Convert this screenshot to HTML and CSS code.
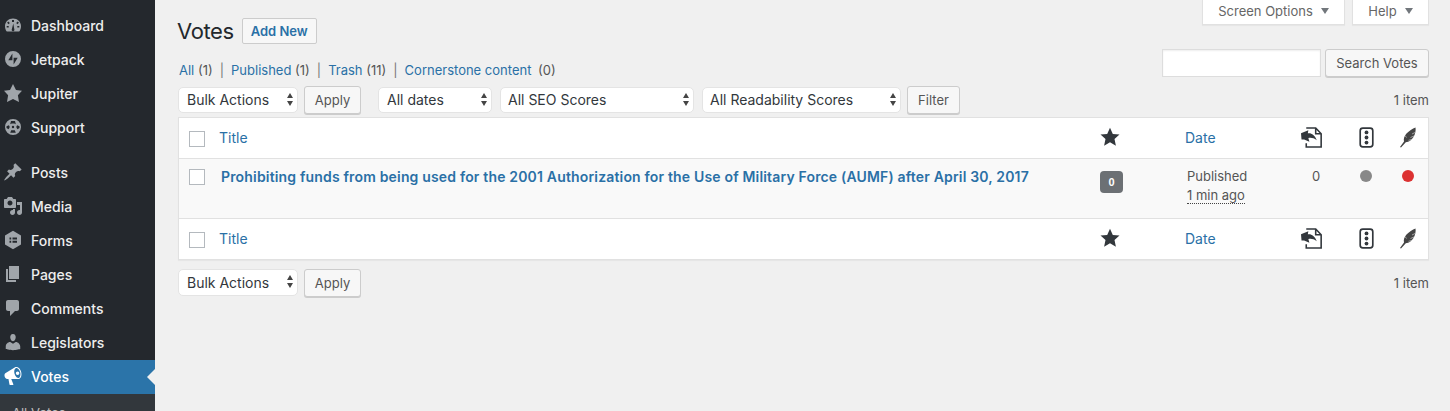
FILE: index.html
```html
<!DOCTYPE html>
<html lang="en">
<head>
  <meta charset="UTF-8">
  <meta name="viewport" content="width=device-width, initial-scale=1.0">
  <title>Votes</title>
  <link rel="stylesheet" href="styles.css">
</head>
<body>

<nav class="sidebar">
  <ul class="menu">
    <li><svg class="menu-icon" viewBox="0 0 20 20"><path fill-rule="evenodd" d="M3.800 16.500C2.600 15 2 13.300 2 11.200 2 6.800 5.500 3.500 10 3.500s8 3.300 8 7.700c0 2.100-.6 3.800-1.800 5.300zM9 5h2v2H9zM5.300 6.500l1.500 1.500-1.200 1.200-1.500-1.500zm9.400 0l1.200 1.200-1.500 1.500-1.200-1.200zM3.700 11h2v1.500h-2zm10.600 0h2v1.500h-2zM8.800 14.200L10.300 8.500l1 5.700a1.400 1.400 0 1 1-2.500 0z"/></svg>Dashboard</li>
    <li><svg class="menu-icon" viewBox="0 0 20 20"><path fill-rule="evenodd" d="M10 2a8 8 0 1 0 0 16 8 8 0 0 0 0-16zM9.400 4.500v6.800H5.300zM10.600 15.500V8.700h4.100z"/></svg>Jetpack</li>
    <li><svg class="menu-icon" viewBox="0 0 20 20"><path d="M10 1l3 6 6 .75-4.120 4.620L16 19l-6-3-6 3 1.120-6.630L1 7.750 7 7z"/></svg>Jupiter</li>
    <li><svg class="menu-icon" viewBox="0 0 20 20"><path fill-rule="evenodd" d="M10 2a8 8 0 1 0 0 16 8 8 0 0 0 0-16zM10 8.800a1.200 1.200 0 1 1 0 2.400 1.200 1.200 0 0 1 0-2.400zM8 4h4l.8 3.200-1.500-.6H8.700l-1.500.6zM3.500 9.200l2.400-1 .7 1.300-.1 1.200-1 1.600-2-1.300zM16.500 9.200l-2.400-1-.7 1.300.1 1.200 1 1.600 2-1.300zM8.200 13.300h3.600l1 2.500H7.200z"/></svg>Support</li>
    <li class="menu-sep"><svg class="menu-icon" viewBox="0 0 20 20"><path d="M10.440 3.020l1.820-1.820 6.360 6.350-1.830 1.820c-1.050-.68-2.480-.57-3.410.36l-.75.75c-.92.930-1.040 2.350-.35 3.410l-1.830 1.820-2.410-2.410-2.800 2.790c-.42.420-3.380 2.710-3.800 2.290s1.860-3.390 2.280-3.810l2.790-2.790L4.100 9.360l1.830-1.820c1.050.69 2.480.570 3.400-.36l.75-.75c.93-.920 1.050-2.350.36-3.410z"/></svg>Posts</li>
    <li><svg class="menu-icon" viewBox="0 0 20 20"><path fill-rule="evenodd" d="M13 11V4c0-.55-.45-1-1-1h-1.670L9 1H5L3.670 3H2c-.55 0-1 .45-1 1v7c0 .55.45 1 1 1h10c.55 0 1-.45 1-1zM7 4.500c1.380 0 2.500 1.120 2.500 2.500S8.380 9.500 7 9.500 4.500 8.380 4.500 7 5.620 4.500 7 4.500zM14 6h5v10.500c0 1.380-1.120 2.500-2.500 2.500S14 17.880 14 16.500s1.120-2.500 2.500-2.500c.17 0 .34.020.5.050V9h-3V6zm-4 8.050V13h2v3.500c0 1.380-1.120 2.500-2.500 2.500S7 17.880 7 16.500 8.120 14 9.500 14c.17 0 .34.020.5.050z"/></svg>Media</li>
    <li><svg class="menu-icon" viewBox="0 0 20 20"><path fill-rule="evenodd" d="M10 .8l8 4.600v9.200l-8 4.600-8-4.600V5.400zM6.500 7.500v2h1.700v-2zM9.500 7.500v2h4.500v-2zM6.500 10.700v2h1.700v-2zM9.500 10.700v2h4.500v-2z"/></svg>Forms</li>
    <li><svg class="menu-icon" viewBox="0 0 20 20"><path d="M6 15V2h10v13H6zm-1 1h8v2H3V5h2v11z"/></svg>Pages</li>
    <li><svg class="menu-icon" viewBox="0 0 20 20"><path d="M5 2h9c1.100 0 2 .9 2 2v7c0 1.100-.9 2-2 2h-2l-5 5v-5H5c-1.100 0-2-.9-2-2V4c0-1.100.9-2 2-2z"/></svg>Comments</li>
    <li><svg class="menu-icon" viewBox="0 0 20 20"><path d="M10 9.250c-2.270 0-2.730-3.440-2.730-3.440C7 4.020 7.820 2 9.970 2c2.160 0 2.980 2.020 2.710 3.810 0 0-.41 3.440-2.680 3.440zm0 2.570L12.720 10c2.390 0 4.520 2.330 4.520 4.530v2.490s-3.650 1.130-7.240 1.130c-3.650 0-7.240-1.130-7.240-1.130v-2.490c0-2.250 1.940-4.480 4.460-4.480z"/></svg>Legislators</li>
    <li class="menu-current"><svg class="menu-icon" viewBox="0 0 20 20"><path fill-rule="evenodd" d="M18.150 5.940c.46 1.620.38 3.220-.02 4.480-.42 1.280-1.260 2.180-2.300 2.480-.16.06-.26.06-.4.06-.06.02-.12.02-.18.02-.06.02-.14.02-.22.02H8.230l2.220 5.500c.02.14-.06.26-.14.34-.08.1-.24.16-.34.16H6.950c-.1 0-.26-.06-.34-.16-.08-.08-.16-.2-.14-.34l-1-5.500H4.250l-.02-.02c-.5.06-1.080-.18-1.540-.62s-.88-1.080-1.060-1.880c-.24-.8-.2-1.560-.02-2.200.18-.62.58-1.080 1.060-1.300l.02-.02 9-5.400c.1-.06.18-.1.24-.16.06-.04.14-.08.24-.12.16-.08.28-.12.5-.18 1.040-.3 2.240.1 3.220.98s1.840 2.240 2.260 3.860zm-2.580 5.980c.4-.1.74-.34 1.040-.7.58-.7.86-1.760.86-3.040 0-.64-.1-1.300-.28-1.980-.34-1.360-1.020-2.500-1.780-3.240-.38-.38-.8-.64-1.180-.78-.38-.12-.76-.14-1.100-.06-.6.14-1.080.6-1.400 1.240-.32.66-.48 1.500-.48 2.420 0 .66.1 1.340.28 2.020.34 1.360 1.020 2.500 1.780 3.240.38.38.8.64 1.180.78.38.12.76.14 1.100.06zM14.600 5.500a1.800 1.800 0 1 1 0 3.600 1.800 1.800 0 0 1 0-3.600z"/></svg>Votes</li>
  </ul>
  <div class="submenu">All Votes</div>
</nav>

<main class="content">
  <div class="top">
    <div class="top-left">
      <div class="heading">
        <h1>Votes</h1>
        <a class="add-new">Add New</a>
      </div>
      <ul class="subsub">
        <li><a>All</a> <span class="count">(1)</span></li>
        <li><a>Published</a> <span class="count">(1)</span></li>
        <li><a>Trash</a> <span class="count">(11)</span></li>
        <li><a>Cornerstone content</a> <span class="count count-wide">(0)</span></li>
      </ul>
    </div>
    <div class="top-right">
      <div class="tabs">
        <div class="tab tab-screen">Screen Options<span class="caret"></span></div>
        <div class="tab tab-help">Help<span class="caret"></span></div>
      </div>
      <div class="search">
        <input class="search-input" type="text">
        <button class="btn btn-search">Search Votes</button>
      </div>
    </div>
  </div>

  <div class="tablenav">
    <div class="fake-select sel-bulk">Bulk Actions</div>
    <button class="btn btn-apply">Apply</button>
    <div class="fake-select sel-dates">All dates</div>
    <div class="fake-select sel-seo">All SEO Scores</div>
    <div class="fake-select sel-read">All Readability Scores</div>
    <button class="btn btn-filter">Filter</button>
    <span class="items">1 item</span>
  </div>

  <table class="list">
    <colgroup>
      <col class="col-cb"><col class="col-title"><col class="col-star"><col class="col-date"><col class="col-links"><col class="col-light"><col class="col-read">
    </colgroup>
    <thead>
      <tr>
        <th><span class="check"></span></th>
        <th><a class="sort-link">Title</a></th>
        <th><svg class="star" viewBox="0 0 20 20"><path d="M10 .8l2.800 6.100 6.700.7-5 4.500 1.400 6.600-5.900-3.400-5.900 3.400 1.400-6.600-5-4.500 6.700-.7z"/></svg></th>
        <th><a class="sort-link">Date</a></th>
        <th><svg class="col-icon" viewBox="0 0 20 20"><path fill="none" stroke="currentColor" stroke-width="1.500" d="M5 1h9l5.200 5.500V19H5v-3.500M14 1v5.500h5.200"/><path d="M0 6l7-3-.5 3c3.500-.5 6.500 1.500 8.500 6.500-3-2-5-2.500-8-2l1 3.500-5-2H.5z"/></svg></th>
        <th><svg class="col-icon icon-light" viewBox="0 0 14 20"><rect x="1" y="1" width="12" height="18" rx="2.500" fill="none" stroke="currentColor" stroke-width="1.600"/><circle cx="7" cy="5.200" r="1.800"/><circle cx="7" cy="10" r="1.800"/><circle cx="7" cy="14.800" r="1.800"/></svg></th>
        <th><svg class="col-icon icon-quill" viewBox="0 0 16 20"><path d="M15.500 0c.5 3-.2 6.500-2 9.500-1.800 3-4.500 5-7.700 5.300L1 20l-1-.5 4-5.500c-.6-2.500.2-5.600 2.500-8C9 3.500 12.500 1 15.500 0z"/><path class="quill-cut" d="M15 5l-3 1.500M14 8.500l-3.500 1.500M11.500 12l-3 .8M5 8l1.500 2"/></svg></th>
      </tr>
    </thead>
    <tbody>
      <tr>
        <td><span class="check"></span></td>
        <td><a class="row-title">Prohibiting funds from being used for the 2001 Authorization for the Use of Military Force (AUMF) after April 30, 2017</a></td>
        <td><span class="badge">0</span></td>
        <td class="cell-date"><div class="cell-up">Published<br><abbr class="ago">1 min ago</abbr></div></td>
        <td class="cell-count"><div class="cell-up">0</div></td>
        <td><span class="dot dot-gray"></span></td>
        <td><span class="dot dot-red"></span></td>
      </tr>
    </tbody>
    <tfoot>
      <tr>
        <th><span class="check"></span></th>
        <th><a class="sort-link">Title</a></th>
        <th><svg class="star" viewBox="0 0 20 20"><path d="M10 .8l2.800 6.100 6.700.7-5 4.500 1.400 6.600-5.900-3.400-5.900 3.400 1.400-6.600-5-4.500 6.700-.7z"/></svg></th>
        <th><a class="sort-link">Date</a></th>
        <th><svg class="col-icon" viewBox="0 0 20 20"><path fill="none" stroke="currentColor" stroke-width="1.500" d="M5 1h9l5.200 5.500V19H5v-3.500M14 1v5.500h5.200"/><path d="M0 6l7-3-.5 3c3.500-.5 6.500 1.500 8.500 6.500-3-2-5-2.500-8-2l1 3.500-5-2H.5z"/></svg></th>
        <th><svg class="col-icon icon-light" viewBox="0 0 14 20"><rect x="1" y="1" width="12" height="18" rx="2.500" fill="none" stroke="currentColor" stroke-width="1.600"/><circle cx="7" cy="5.200" r="1.800"/><circle cx="7" cy="10" r="1.800"/><circle cx="7" cy="14.800" r="1.800"/></svg></th>
        <th><svg class="col-icon icon-quill" viewBox="0 0 16 20"><path d="M15.500 0c.5 3-.2 6.500-2 9.500-1.800 3-4.500 5-7.700 5.300L1 20l-1-.5 4-5.500c-.6-2.500.2-5.600 2.500-8C9 3.500 12.500 1 15.500 0z"/><path class="quill-cut" d="M15 5l-3 1.500M14 8.500l-3.500 1.500M11.500 12l-3 .8M5 8l1.500 2"/></svg></th>
      </tr>
    </tfoot>
  </table>

  <div class="tablenav tablenav-bottom">
    <div class="fake-select sel-bulk">Bulk Actions</div>
    <button class="btn btn-apply">Apply</button>
    <span class="items">1 item</span>
  </div>
</main>

</body>
</html>
```
FILE: styles.css
```css
* {
  box-sizing: border-box;
}
html, body {
  height: 411px;
  margin: 0;
  overflow: hidden;
}
body {
  display: flex;
  background-color: #f0f0f0;
  color: #444;
  font-family: Inter, "Liberation Sans", sans-serif;
  font-size: 13px;
}
a {
  color: #2a70a6;
}
ul {
  list-style: none;
  margin: 0;
  padding: 0;
}

/* sidebar */
.sidebar {
  width: 155px;
  flex-shrink: 0;
  background-color: #24282d;
  overflow: hidden;
}
.menu {
  padding-top: 9px;
}
.menu li {
  position: relative;
  display: flex;
  align-items: center;
  height: 34px;
  padding: 0 0 2px 3px;
  color: #eee;
  font-size: 14px;
  font-weight: 500;
}
.menu-sep {
  margin-top: 11px;
}
.menu-icon {
  width: 20px;
  height: 20px;
  margin-right: 8px;
  fill: #a0a5aa;
}
.menu li.menu-current {
  background-color: #2b74a9;
  color: #fff;
}
.menu-current .menu-icon {
  fill: #fff;
}
.menu-current::after {
  content: "";
  position: absolute;
  right: 0;
  top: 9px;
  border: 8px solid transparent;
  border-right-color: #f0f0f0;
  border-left-width: 0;
}
.submenu {
  height: 40px;
  padding: 11px 0 0 12px;
  background-color: #32373c;
  color: #bbb;
  font-size: 13px;
}

/* page header */
.content {
  flex: 1;
  padding: 0 21px 0 23px;
}
.top {
  display: flex;
  justify-content: space-between;
  height: 86px;
}
.top-left {
  padding-top: 18px;
}
.heading {
  display: flex;
  align-items: center;
  height: 26px;
  margin-left: -1px;
}
h1 {
  margin: 0 8px 0 0;
  color: #23282d;
  font-size: 22px;
  font-weight: 400;
  letter-spacing: -.4px;
}
.add-new {
  display: block;
  width: 75px;
  height: 26px;
  border: 1px solid #ccc;
  border-radius: 2px;
  background-color: #f7f7f7;
  font-size: 13px;
  font-weight: 600;
  line-height: 24px;
  text-align: center;
}
.subsub {
  display: flex;
  margin: 18px 0 0 1px;
  font-size: 13px;
  line-height: 16px;
}
.subsub li + li::before {
  content: "|";
  margin: 0 7px;
  color: #777;
}
.count {
  color: #555;
}
.count-wide {
  margin-left: 3px;
}
.top-right {
  display: flex;
  flex-direction: column;
  align-items: flex-end;
}
.tabs {
  display: flex;
  gap: 7px;
}
.tab {
  display: flex;
  align-items: center;
  justify-content: center;
  height: 25px;
  padding-bottom: 3px;
  background-color: #fff;
  border: 1px solid #e1e1e1;
  border-top: none;
  box-shadow: 0 1px 1px rgba(0, 0, 0, .04);
  color: #666;
  font-size: 13px;
}
.tab-screen {
  width: 143px;
}
.tab-help {
  width: 77px;
}
.caret {
  margin-left: 8px;
  border: 4.500px solid transparent;
  border-top: 6px solid #72777c;
  border-bottom: none;
}
.search {
  display: flex;
  gap: 4px;
  margin-top: 24px;
}
.search-input {
  width: 159px;
  height: 28px;
  border: 1px solid #ddd;
  background-color: #fff;
  box-shadow: inset 0 1px 2px rgba(0, 0, 0, .07);
}

/* buttons and selects */
.btn {
  height: 28px;
  padding: 0;
  border: 1px solid #ccc;
  border-radius: 3px;
  background-color: #f7f7f7;
  box-shadow: 0 1px 0 #ccc;
  color: #555;
  font-family: inherit;
  font-size: 13px;
}
.btn-search {
  width: 104px;
}
.btn-apply {
  width: 57px;
  margin-right: 17px;
}
.btn-filter {
  width: 53px;
}
.fake-select {
  position: relative;
  height: 26px;
  margin-top: 1px;
  padding-left: 8px;
  border: 1px solid #e4e4e4;
  border-radius: 5px;
  background-color: #fff;
  color: #32373c;
  font-size: 14px;
  line-height: 24px;
}
.fake-select::before,
.fake-select::after {
  content: "";
  position: absolute;
  right: 4px;
  border: 3.500px solid transparent;
}
.fake-select::before {
  top: 5px;
  border-top: none;
  border-bottom: 5px solid #444;
}
.fake-select::after {
  top: 13px;
  border-bottom: none;
  border-top: 5px solid #444;
}
.sel-bulk {
  width: 120px;
  margin-right: 6px;
}
.sel-dates {
  width: 114px;
  margin-right: 8px;
}
.sel-seo {
  width: 194px;
  margin-right: 8px;
  padding-left: 7px;
}
.sel-read {
  width: 199px;
  margin-right: 6px;
  padding-left: 7px;
}
.tablenav {
  display: flex;
  align-items: flex-start;
  height: 31px;
}
.tablenav-bottom {
  margin-top: 9px;
}
.tablenav-bottom .fake-select {
  height: 27px;
  margin-top: 0;
  line-height: 25px;
}
.items {
  margin-left: auto;
  color: #555;
  line-height: 28px;
}

/* table */
.list {
  width: 100%;
  table-layout: fixed;
  border: 1px solid #e1e1e1;
  border-collapse: separate;
  border-spacing: 0;
  background-color: #fff;
  box-shadow: 0 1px 1px rgba(0, 0, 0, .04);
}
.col-cb { width: 30px; }
.col-star { width: 87px; }
.col-date { width: 114px; }
.col-links { width: 56px; }
.col-light { width: 42px; }
.col-read { width: 41px; }
th {
  height: 41px;
  padding: 0 0 0 10px;
  font-weight: 400;
  font-size: 14px;
  text-align: left;
  vertical-align: middle;
  color: #32373c;
}
thead th {
  border-bottom: 1px solid #e1e1e1;
}
tfoot th {
  border-top: 1px solid #e1e1e1;
}
.sort-link {
  display: block;
  margin-bottom: 2px;
}
tbody tr {
  background-color: #f9f9f9;
}
td {
  height: 59px;
  padding: 9px 0 0 10px;
  vertical-align: top;
  line-height: 19px;
}
.cell-up {
  margin-top: -1px;
}
.check {
  display: block;
  width: 16px;
  height: 16px;
  margin-top: 1px;
  border: 1px solid #b4b9be;
  background-color: #fff;
}
.row-title {
  display: block;
  margin: -1px 0 0 2px;
  font-size: 14px;
  font-weight: 600;
  letter-spacing: .17px;
  white-space: nowrap;
}
.star {
  display: block;
  width: 20px;
  height: 20px;
  margin: 0 0 3px 2px;
  fill: #32373c;
}
.col-icon {
  display: block;
  width: 21px;
  height: 21px;
  margin: 0 0 1px 2px;
  fill: #32373c;
  color: #32373c;
}
.icon-light {
  width: 15px;
  margin-left: 4px;
}
.icon-quill {
  width: 16px;
  margin-left: 3px;
  fill: #444;
}
.quill-cut {
  fill: none;
  stroke: #fff;
  stroke-width: .5;
}
.badge {
  display: block;
  width: 23px;
  height: 22px;
  margin: 3px 0 0 2px;
  border-radius: 4px;
  background-color: #6c7074;
  color: #fff;
  font-family: "Liberation Sans", sans-serif;
  font-size: 11px;
  font-weight: 700;
  line-height: 22px;
  text-align: center;
}
.cell-date {
  padding-left: 12px;
  color: #555;
}
.ago {
  border-bottom: 1px dotted #444;
}
.cell-count {
  padding-left: 23px;
  color: #555;
}
.dot {
  display: block;
  width: 12px;
  height: 12px;
  margin: 2px 0 0 5px;
  border-radius: 50%;
}
.dot-gray {
  background-color: #888;
}
.dot-red {
  background-color: #dc3232;
}
```
